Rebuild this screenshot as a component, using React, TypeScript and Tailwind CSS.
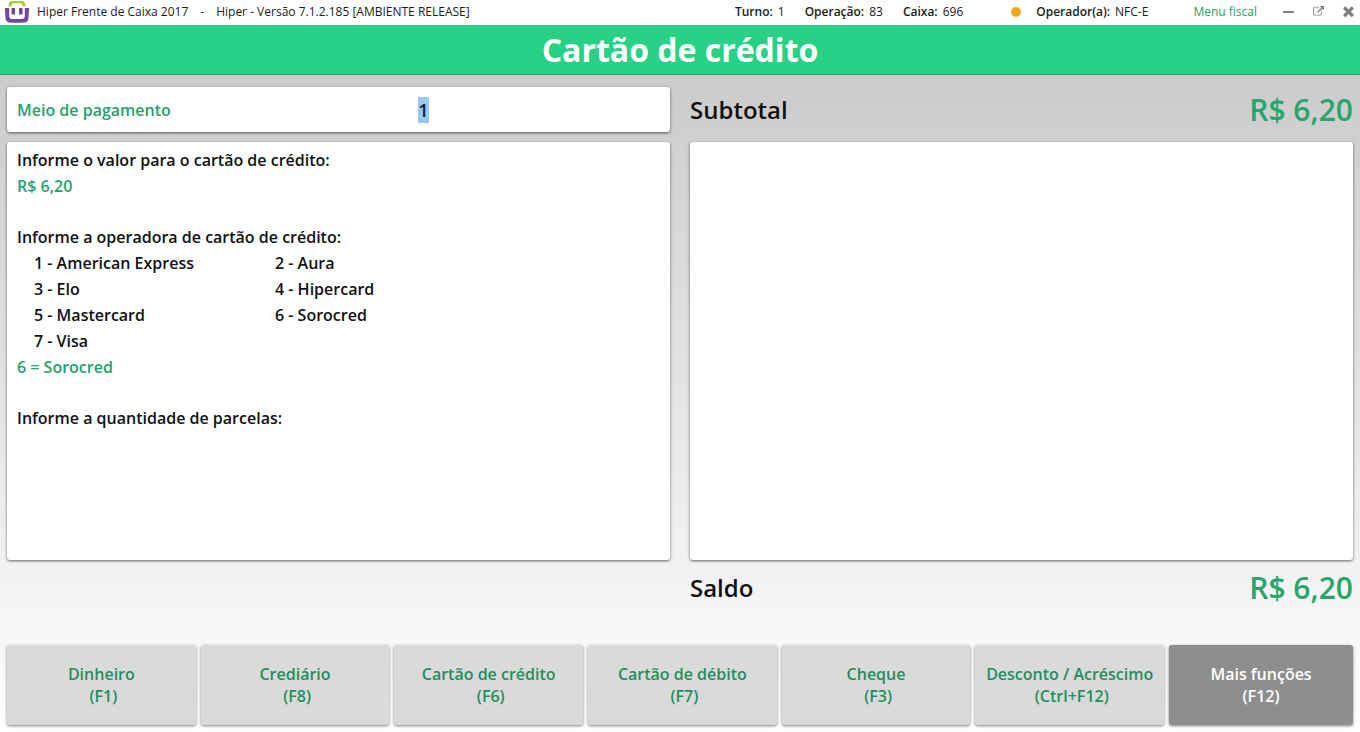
import { useEffect, useRef } from "react";

const paymentButtons = [
  { label: "Dinheiro", shortcut: "(F1)" },
  { label: "Crediário", shortcut: "(F8)" },
  { label: "Cartão de crédito", shortcut: "(F6)" },
  { label: "Cartão de débito", shortcut: "(F7)" },
  { label: "Cheque", shortcut: "(F3)" },
  { label: "Desconto / Acréscimo", shortcut: "(Ctrl+F12)" },
];

const cardOperators = [
  "1 - American Express",
  "2 - Aura",
  "3 - Elo",
  "4 - Hipercard",
  "5 - Mastercard",
  "6 - Sorocred",
  "7 - Visa",
];

function Logo() {
  return (
    <svg className="h-[22px] w-[26px] shrink-0" viewBox="0 0 26 22" fill="none" aria-hidden="true">
      <path d="M6 5.500V4Q6.500 .8 10 .8h6q3.500 0 4 3.200v1.500" stroke="#a4d13a" strokeWidth="3" />
      <path d="M.8 7h4.400v8q0 3 3 3h9.600q3 0 3-3V7h4.400l-.8 10.500q-.4 3.700-4 4-7.400.6-14.800 0-3.600-.3-4-4z" fill="#7048a0" />
      <path d="M7.500 7H11v6.500H7.500zM15 7h3.500v6.500H15z" fill="#7048a0" />
    </svg>
  );
}

function StatusItem({ label, value }: { label: string; value: string }) {
  return (
    <span className="flex gap-[5px]">
      <b className="font-semibold">{label}</b>
      <span>{value}</span>
    </span>
  );
}

function TitleBar() {
  return (
    <header className="flex h-[25px] shrink-0 items-center bg-white pr-1.5 pb-0.5 pl-1 text-xs text-[#1a1a1a]">
      <Logo />
      <div className="flex flex-1 pl-[7px]">
        <span>Hiper Frente de Caixa 2017</span>
        <span className="px-3">-</span>
        <span>Hiper - Versão 7.1.2.185 [AMBIENTE RELEASE]</span>
      </div>
      <div className="flex items-center gap-5">
        <StatusItem label="Turno:" value="1" />
        <StatusItem label="Operação:" value="83" />
        <StatusItem label="Caixa:" value="696" />
      </div>
      <span className="mr-[15px] ml-12 size-[10px] rounded-full bg-[#f0a820]" />
      <StatusItem label="Operador(a):" value="NFC-E" />
      <a href="#menu-fiscal" className="ml-[45px] text-[#27a06c]">Menu fiscal</a>
      <div className="ml-[26px] flex items-center gap-[19px] text-[#808080]">
        <button type="button" aria-label="Minimizar">
          <svg className="h-[10px] w-[11px]" viewBox="0 0 11 10" fill="currentColor">
            <rect x="0" y="4" width="11" height="2" rx="0.5" />
          </svg>
        </button>
        <button type="button" aria-label="Restaurar">
          <svg className="size-[11px]" viewBox="0 0 1792 1792" fill="currentColor">
            <path d="M1408 928v320q0 119-84.500 203.500t-203.500 84.500h-832q-119 0-203.500-84.500t-84.500-203.500v-832q0-119 84.500-203.500t203.500-84.500h704q14 0 23 9t9 23v64q0 14-9 23t-23 9h-704q-66 0-113 47t-47 113v832q0 66 47 113t113 47h832q66 0 113-47t47-113v-320q0-14 9-23t23-9h64q14 0 23 9t9 23zm384-864v512q0 26-19 45t-45 19-45-19l-176-176-652 652q-10 10-23 10t-23-10l-114-114q-10-10-10-23t10-23l652-652-176-176q-19-19-19-45t19-45 45-19h512q26 0 45 19t19 45z" />
          </svg>
        </button>
        <button type="button" aria-label="Fechar">
          <svg className="size-[11px]" viewBox="302 302 1188 1252" fill="currentColor">
            <path d="M1490 1322q0 40-28 68l-136 136q-28 28-68 28t-68-28l-294-294-294 294q-28 28-68 28t-68-28l-136-136q-28-28-28-68t28-68l294-294-294-294q-28-28-28-68t28-68l136-136q28-28 68-28t68 28l294 294 294-294q28-28 68-28t68 28l136 136q28 28 28 68t-28 68l-294 294 294 294q28 28 28 68z" />
          </svg>
        </button>
      </div>
    </header>
  );
}

function TotalRow({ label, value }: { label: string; value: string }) {
  return (
    <div className="flex items-center justify-between font-semibold">
      <span className="text-2xl text-[#111]">{label}</span>
      <span className="text-3xl text-[#27a56c]">{value}</span>
    </div>
  );
}

export default function App() {
  const inputRef = useRef<HTMLInputElement>(null);

  useEffect(() => {
    inputRef.current?.focus();
    inputRef.current?.select();
  }, []);

  return (
    <div className="flex min-h-screen flex-col font-['Open_Sans',sans-serif]">
      <TitleBar />
      <h1 className="flex h-[50px] shrink-0 items-center justify-center border-b border-[#26a269] bg-[#28d185] text-[32px] font-bold text-white">
        Cartão de crédito
      </h1>
      <main className="flex flex-1 flex-col bg-linear-to-b from-[#cbcbcb] to-white px-[7px] pt-3 pb-[7px]">
        <div className="grid flex-1 grid-cols-2 grid-rows-[45px_1fr_56px] gap-x-5">
          <div className="flex items-center rounded-[3px] bg-white px-2.5 shadow-[0_1px_3px_rgba(0,0,0,0.6)]">
            <label htmlFor="payment" className="text-base font-semibold text-[#27a06c]">
              Meio de pagamento
            </label>
            <input
              id="payment"
              ref={inputRef}
              defaultValue="1"
              className="ml-4 min-w-0 flex-1 bg-transparent text-center text-lg leading-[26px] font-semibold text-[#111] outline-none selection:bg-[#99c9ef] selection:text-[#0a1f44]"
            />
          </div>
          <TotalRow label="Subtotal" value="R$ 6,20" />
          <section className="mt-2.5 rounded-[3px] bg-white px-2.5 py-[5px] text-base leading-[26px] font-semibold text-[#111] shadow-[0_1px_3px_rgba(0,0,0,0.6)]">
            <p>Informe o valor para o cartão de crédito:</p>
            <p className="text-[#27a06c]">R$ 6,20</p>
            <p className="mt-[25px]">Informe a operadora de cartão de crédito:</p>
            <ul className="grid grid-cols-[241px_1fr] pl-[17px]">
              {cardOperators.map((name) => (
                <li key={name}>{name}</li>
              ))}
            </ul>
            <p className="text-[#27a06c]">6 = Sorocred</p>
            <p className="mt-[25px]">Informe a quantidade de parcelas:</p>
          </section>
          <section className="mt-2.5 rounded-[3px] bg-white shadow-[0_1px_3px_rgba(0,0,0,0.6)]" />
          <div className="col-start-2 grid">
            <TotalRow label="Saldo" value="R$ 6,20" />
          </div>
        </div>
        <nav className="mt-[29px] flex h-20 gap-[5px] text-base leading-[22px] font-semibold">
          {paymentButtons.map(({ label, shortcut }) => (
            <button
              key={label}
              type="button"
              className="flex-1 rounded-[3px] bg-[#dadada] text-[#1f8f5c] shadow-[0_1px_3px_rgba(0,0,0,0.5)]"
            >
              {label}
              <br />
              &nbsp;{shortcut}
            </button>
          ))}
          <button
            type="button"
            className="w-[184px] rounded-[3px] bg-[#8e8e8e] text-white shadow-[0_1px_3px_rgba(0,0,0,0.5)]"
          >
            Mais funções
            <br />
            (F12)
          </button>
        </nav>
      </main>
    </div>
  );
}
